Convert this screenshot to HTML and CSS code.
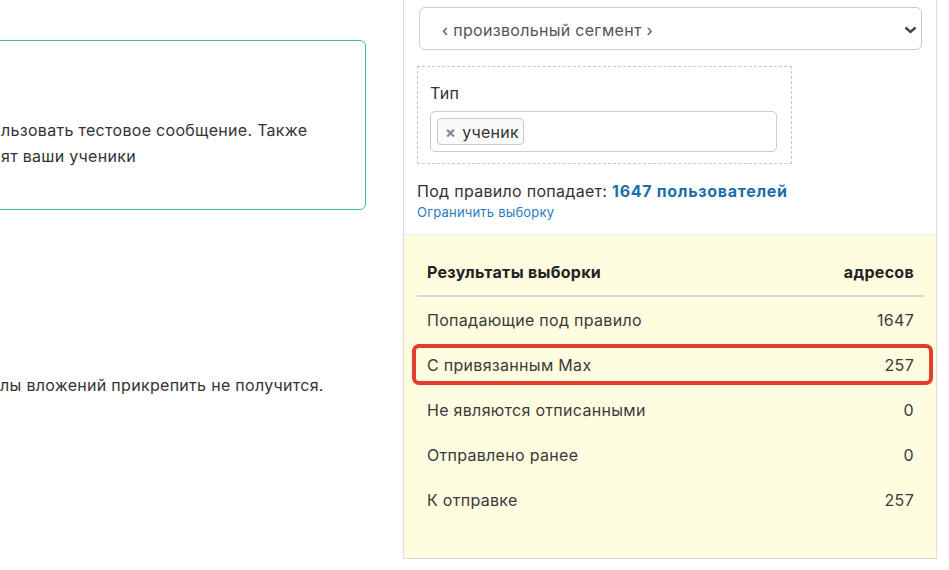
FILE: index.html
```html
<!DOCTYPE html>
<html lang="ru">

<head>
	<meta charset="UTF-8" />
	<meta name="viewport" content="width=device-width, initial-scale=1.0" />
	<title>Рассылка</title>
	<link rel="stylesheet" href="styles.css">
</head>

<body>
	<div class="page">
		<div class="main">
			<div class="notice">
				<p>льзовать тестовое сообщение. Также<br>ят ваши ученики</p>
			</div>
			<p class="hint">лы вложений прикрепить не получится.</p>
		</div>

		<aside class="panel">
			<div class="filters">
				<div class="select">
					<span>‹ произвольный сегмент ›</span>
					<svg class="chevron" width="13" height="8" viewBox="0 0 13 8">
						<path d="M1.5 1.5 L6.5 6 L11.5 1.5" fill="none" stroke="#444" stroke-width="2.4" />
					</svg>
				</div>
				<div class="rule">
					<div class="rule-label">Тип</div>
					<div class="tags">
						<span class="tag"><span class="tag-x">×</span>ученик</span>
					</div>
				</div>
				<div class="count">Под правило попадает: <b>1647 пользователей</b></div>
				<a class="limit" href="#">Ограничить выборку</a>
			</div>

			<div class="results">
				<div class="row head">
					<span>Результаты выборки</span>
					<span>адресов</span>
				</div>
				<div class="row">
					<span>Попадающие под правило</span>
					<span>1647</span>
				</div>
				<div class="row marked">
					<span>С привязанным Max</span>
					<span>257</span>
				</div>
				<div class="row">
					<span>Не являются отписанными</span>
					<span>0</span>
				</div>
				<div class="row">
					<span>Отправлено ранее</span>
					<span>0</span>
				</div>
				<div class="row">
					<span>К отправке</span>
					<span>257</span>
				</div>
			</div>
		</aside>
	</div>
</body>

</html>
```

FILE: styles.css
```css
html,
body {
	margin: 0;
	height: 100%;
}

body {
	background: #fff;
	color: #333;
	font-family: Inter, "Noto Sans", sans-serif;
	font-size: 16px;
	letter-spacing: 0.3px;
	overflow: hidden;
}

.page {
	display: flex;
	align-items: flex-start;
	width: 949px;
}

/* левая колонка, обрезана краем окна */
.main {
	width: 403px;
	padding-right: 37px;
	box-sizing: border-box;
	padding-top: 40px;
}

.notice {
	margin-left: -40px;
	height: 170px;
	box-sizing: border-box;
	border: 1px solid #3dbdb0;
	border-radius: 6px;
	padding: 76px 10px 0 40px;
}

.notice p {
	margin: 0;
	line-height: 26px;
	white-space: nowrap;
}

.hint {
	margin: 162px 0 0;
	line-height: 26px;
	white-space: nowrap;
}

/* правая панель */
.panel {
	width: 534px;
	box-sizing: border-box;
	border: 1px solid #ddd;
	border-top: none;
}

.filters {
	padding: 7px 14px 13px 13px;
}

.select {
	margin-left: 2px;
	height: 43px;
	box-sizing: border-box;
	border: 1px solid #ccc;
	border-radius: 6px;
	display: flex;
	align-items: center;
	justify-content: space-between;
	padding: 2px 4px 0 22px;
	color: #555;
}

.rule {
	margin-top: 16px;
	width: 375px;
	box-sizing: border-box;
	border: 1px dashed #c8c8c8;
	padding: 14px 14px 11px 12px;
}

.rule-label {
	line-height: 24px;
	color: #333;
}

.tags {
	margin-top: 6px;
	height: 41px;
	box-sizing: border-box;
	border: 1px solid #ccc;
	border-radius: 5px;
	padding: 6px;
}

.tag {
	display: inline-flex;
	align-items: center;
	height: 27px;
	box-sizing: border-box;
	border: 1px solid #c8c8c8;
	border-radius: 4px;
	background: #fafafa;
	padding: 0 4px 0 7px;
	color: #333;
}

.tag-x {
	color: #888;
	font-weight: bold;
	font-size: 16px;
	margin-right: 6px;
}

.count {
	margin-top: 15px;
	line-height: 24px;
}

.count b {
	color: #1b6eaa;
	letter-spacing: 0.7px;
}

.limit {
	display: block;
	font-size: 13px;
	letter-spacing: 0.2px;
	line-height: 18px;
	color: #2b7cbf;
	text-decoration: none;
}

/* результаты */
.results {
	background: #fffddf;
	border-top: 1px solid #eee;
	padding: 14px 12px 36px 13px;
}

.row {
	display: flex;
	justify-content: space-between;
	align-items: center;
	height: 45px;
	padding: 0 10px;
	position: relative;
	color: #3a3a3a;
}

.row.head {
	height: 46px;
	border-bottom: 2px solid #d6d6d6;
	font-weight: bold;
	color: #222;
}

.row.marked::after {
	content: "";
	position: absolute;
	top: 2px;
	bottom: 2px;
	left: -5px;
	right: -9px;
	border: 4px solid #e43d30;
	border-radius: 7px;
	pointer-events: none;
}
```
